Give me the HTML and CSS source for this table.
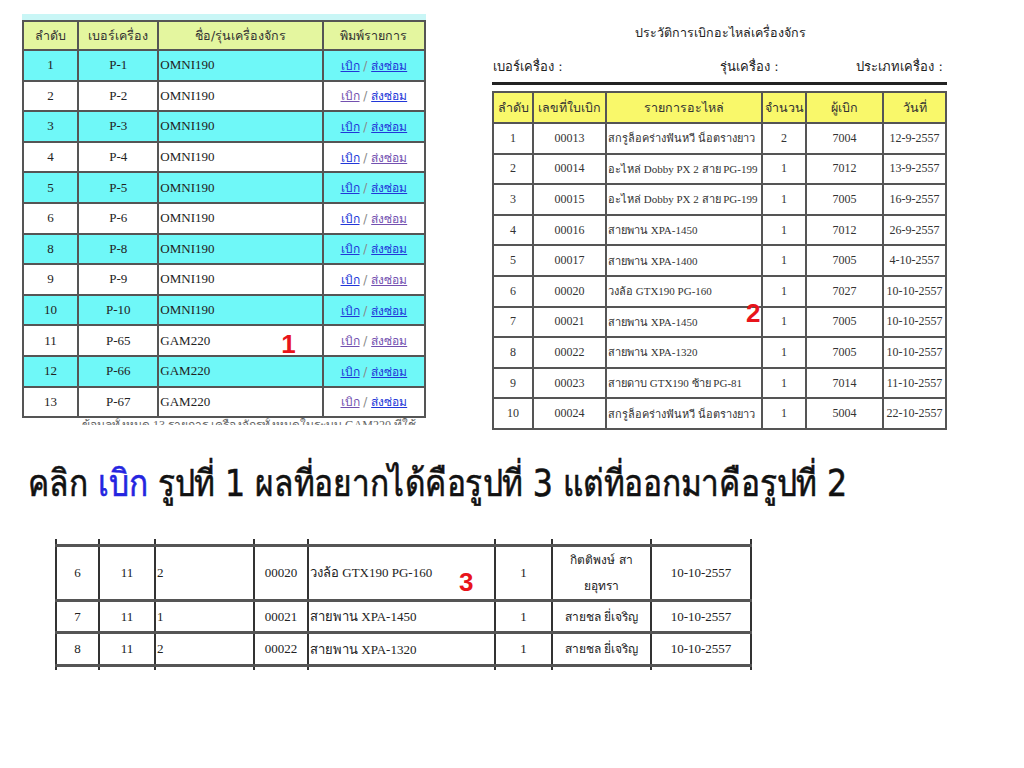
FILE: index.html
```html
<!DOCTYPE html>
<html lang="th">
<head>
<meta charset="utf-8">
<link rel="stylesheet" href="styles.css">
</head>
<body>
<div class="top">
  <div class="shot1">
    <table class="t1">
      <colgroup><col class="c1a"><col class="c1b"><col class="c1c"><col class="c1d"></colgroup>
      <tr class="hd"><th>ลำดับ</th><th>เบอร์เครื่อง</th><th>ชื่อ/รุ่นเครื่องจักร</th><th>พิมพ์รายการ</th></tr>
      <tr class="cy"><td>1</td><td>P-1</td><td class="l">OMNI190</td><td class="lk"><a class="b">เบิก</a> / <a class="b">ส่งซ่อม</a></td></tr>
      <tr><td>2</td><td>P-2</td><td class="l">OMNI190</td><td class="lk"><a class="v">เบิก</a> / <a class="b">ส่งซ่อม</a></td></tr>
      <tr class="cy"><td>3</td><td>P-3</td><td class="l">OMNI190</td><td class="lk"><a class="b">เบิก</a> / <a class="b">ส่งซ่อม</a></td></tr>
      <tr><td>4</td><td>P-4</td><td class="l">OMNI190</td><td class="lk"><a class="b">เบิก</a> / <a class="v">ส่งซ่อม</a></td></tr>
      <tr class="cy"><td>5</td><td>P-5</td><td class="l">OMNI190</td><td class="lk"><a class="b">เบิก</a> / <a class="b">ส่งซ่อม</a></td></tr>
      <tr><td>6</td><td>P-6</td><td class="l">OMNI190</td><td class="lk"><a class="b">เบิก</a> / <a class="v">ส่งซ่อม</a></td></tr>
      <tr class="cy"><td>8</td><td>P-8</td><td class="l">OMNI190</td><td class="lk"><a class="b">เบิก</a> / <a class="b">ส่งซ่อม</a></td></tr>
      <tr><td>9</td><td>P-9</td><td class="l">OMNI190</td><td class="lk"><a class="b">เบิก</a> / <a class="v">ส่งซ่อม</a></td></tr>
      <tr class="cy"><td>10</td><td>P-10</td><td class="l">OMNI190</td><td class="lk"><a class="b">เบิก</a> / <a class="b">ส่งซ่อม</a></td></tr>
      <tr><td>11</td><td>P-65</td><td class="l mark-cell">GAM220<span class="mark m1">1</span></td><td class="lk"><a class="v">เบิก</a> / <a class="v">ส่งซ่อม</a></td></tr>
      <tr class="cy"><td>12</td><td>P-66</td><td class="l">GAM220</td><td class="lk"><a class="b">เบิก</a> / <a class="b">ส่งซ่อม</a></td></tr>
      <tr><td>13</td><td>P-67</td><td class="l">GAM220</td><td class="lk"><a class="v">เบิก</a> / <a class="b">ส่งซ่อม</a></td></tr>
    </table>
    <div class="cutline"><span>ข้อมูลทั้งหมด 13 รายการ เครื่องจักรทั้งหมดในระบบ GAM220 ที่ใช้งาน</span></div>
  </div>

  <div class="shot2">
    <div class="title">ประวัติการเบิกอะไหล่เครื่องจักร</div>
    <div class="info"><span>เบอร์เครื่อง :</span><span>รุ่นเครื่อง :</span><span>ประเภทเครื่อง :</span></div>
    <div class="rule"></div>
    <table class="t2">
      <colgroup><col class="c2a"><col class="c2b"><col class="c2c"><col class="c2d"><col class="c2e"><col class="c2f"></colgroup>
      <tr class="hd2"><th>ลำดับ</th><th>เลขที่ใบเบิก</th><th>รายการอะไหล่</th><th>จำนวน</th><th>ผู้เบิก</th><th>วันที่</th></tr>
      <tr><td>1</td><td>00013</td><td class="l">สกรูล็อคร่างฟันหวี น็อตรางยาว</td><td>2</td><td>7004</td><td>12-9-2557</td></tr>
      <tr><td>2</td><td>00014</td><td class="l">อะไหล่ Dobby PX 2 สาย PG-199</td><td>1</td><td>7012</td><td>13-9-2557</td></tr>
      <tr><td>3</td><td>00015</td><td class="l">อะไหล่ Dobby PX 2 สาย PG-199</td><td>1</td><td>7005</td><td>16-9-2557</td></tr>
      <tr><td>4</td><td>00016</td><td class="l">สายพาน XPA-1450</td><td>1</td><td>7012</td><td>26-9-2557</td></tr>
      <tr><td>5</td><td>00017</td><td class="l">สายพาน XPA-1400</td><td>1</td><td>7005</td><td>4-10-2557</td></tr>
      <tr><td>6</td><td>00020</td><td class="l">วงล้อ GTX190 PG-160</td><td>1</td><td>7027</td><td>10-10-2557</td></tr>
      <tr><td>7</td><td>00021</td><td class="l mark-cell">สายพาน XPA-1450<span class="mark m2">2</span></td><td>1</td><td>7005</td><td>10-10-2557</td></tr>
      <tr><td>8</td><td>00022</td><td class="l">สายพาน XPA-1320</td><td>1</td><td>7005</td><td>10-10-2557</td></tr>
      <tr><td>9</td><td>00023</td><td class="l">สายดาบ GTX190 ซ้าย PG-81</td><td>1</td><td>7014</td><td>11-10-2557</td></tr>
      <tr><td>10</td><td>00024</td><td class="l">สกรูล็อคร่างฟันหวี น็อตรางยาว</td><td>1</td><td>5004</td><td>22-10-2557</td></tr>
    </table>
  </div>
</div>

<p class="caption"><span class="cap-inner">คลิก <span class="blue">เบิก</span> รูปที่ 1 ผลที่อยากได้คือรูปที่ 3 แต่ที่ออกมาคือรูปที่ 2</span></p>

<div class="shot3">
  <table class="t3">
    <colgroup><col class="c3a"><col class="c3b"><col class="c3c"><col class="c3d"><col class="c3e"><col class="c3f"><col class="c3g"><col class="c3h"></colgroup>
    <tr class="stub"><td></td><td></td><td></td><td></td><td></td><td></td><td></td><td></td></tr>
    <tr class="tall"><td>6</td><td>11</td><td class="l">2</td><td>00020</td><td class="l mark-cell">วงล้อ GTX190 PG-160<span class="mark m3">3</span></td><td>1</td><td class="who">กิตติพงษ์ สา<br>ยอุทรา</td><td>10-10-2557</td></tr>
    <tr><td>7</td><td>11</td><td class="l">1</td><td>00021</td><td class="l">สายพาน XPA-1450</td><td>1</td><td class="who">สายชล ยี่เจริญ</td><td>10-10-2557</td></tr>
    <tr><td>8</td><td>11</td><td class="l">2</td><td>00022</td><td class="l">สายพาน XPA-1320</td><td>1</td><td class="who">สายชล ยี่เจริญ</td><td>10-10-2557</td></tr>
    <tr class="stub"><td></td><td></td><td></td><td></td><td></td><td></td><td></td><td></td></tr>
  </table>
</div>
</body>
</html>
```

FILE: styles.css
```css
html, body {
  margin: 0;
  padding: 0;
  background: #ffffff;
}

body {
  width: 1024px;
  height: 768px;
  overflow: hidden;
  font-family: "Liberation Serif", "DejaVu Serif", serif;
  color: #222;
}

.top {
  display: flex;
  align-items: flex-start;
  padding: 14px 0 0 22px;
}

table {
  border-collapse: collapse;
  table-layout: fixed;
}

/* ---------- shot 1 ---------- */
.shot1 {
  width: 404px;
  border-top: 6px solid #c9f6f6;
}

.t1 {
  width: 404px;
  border: 2px solid #555;
}

.t1 th, .t1 td {
  border: 2px solid #555;
  padding: 0 1px;
  font-size: 13px;
  text-align: center;
  height: 28.6px;
  white-space: nowrap;
}

.t1 tr.hd th {
  height: 27px;
  background: #e4f69f;
  font-weight: normal;
  font-family: "DejaVu Sans", "Noto Sans", sans-serif;
  font-size: 12.5px;
  color: #333;
}

.t1 tr.cy td { background: #6ff8f8; }

.c1a { width: 55px; }
.c1b { width: 80px; }
.c1c { width: 164px; }
.c1d { width: 102px; }

.t1 td.l, .t2 td.l, .t3 td.l { text-align: left; }

.t1 td.lk {
  font-family: "DejaVu Sans", "Noto Sans", sans-serif;
  font-size: 12px;
  color: #888;
}
.lk a { text-decoration: underline; }
.lk a.b { color: #2236d8; }
.lk a.v { color: #7350b0; }

.mark-cell { position: relative; }
.mark {
  position: absolute;
  color: #e8141b;
  font-family: "Liberation Sans", "DejaVu Sans", sans-serif;
  font-weight: bold;
  font-size: 26px;
  line-height: 1;
}
.m1 { left: 122px; top: 5px; }
.m2 { left: 139px; top: -8px; }
.m3 { left: 150px; top: 22px; }

.cutline {
  height: 7px;
  overflow: hidden;
  font-size: 12px;
  color: #666;
  line-height: 20px;
  padding-left: 60px;
}
.cutline span { display: block; margin-top: -3px; }

/* ---------- shot 2 ---------- */
.shot2 {
  width: 455px;
  margin-left: 66px;
  margin-top: 9px;
  font-family: "DejaVu Sans", "Noto Sans", sans-serif;
  color: #222;
}

.title {
  text-align: center;
  font-size: 12.5px;
  line-height: 20px;
  height: 20px;
  padding-left: 2px;
}

.info {
  display: flex;
  justify-content: space-between;
  font-size: 13px;
  line-height: 20px;
  margin-top: 14px;
  padding: 0 4px 0 1px;
}
.info span:nth-child(2) { margin-left: 80px; }

.rule {
  height: 3px;
  background: #222;
  margin-top: 5px;
}

.t2 {
  width: 455px;
  margin-top: 6px;
  border: 2px solid #555;
}

.t2 th, .t2 td {
  border: 2px solid #555;
  font-family: "Liberation Serif", "DejaVu Serif", serif;
  font-size: 12px;
  text-align: center;
  height: 28.6px;
  padding: 0 1px;
  white-space: nowrap;
  color: #333;
}

.t2 tr.hd2 th {
  background: #f9f86a;
  font-weight: normal;
  font-family: "DejaVu Sans", "Noto Sans", sans-serif;
  font-size: 12.5px;
  height: 29px;
}

.t2 td.l { font-size: 11px; }

.c2a { width: 40px; }
.c2b { width: 73px; }
.c2c { width: 156px; }
.c2d { width: 44px; }
.c2e { width: 77px; }
.c2f { width: 63px; }

/* ---------- caption ---------- */
.caption {
  margin: 30px 0 0 28px;
  font-family: "DejaVu Sans", "Noto Sans", sans-serif;
  font-size: 37px;
  line-height: 48px;
  color: #111;
  white-space: nowrap;
}
.cap-inner {
  display: inline-block;
  transform: scaleX(0.855);
  transform-origin: left center;
  -webkit-text-stroke: 0.6px #111;
}
.caption .blue { color: #2424e0; -webkit-text-stroke: 0.6px #2424e0; }

/* ---------- shot 3 ---------- */
.shot3 {
  margin: 31px 0 0 55px;
  width: 697px;
  height: 131px;
  overflow: hidden;
}

.t3 {
  width: 697px;
  border-left: 2px solid #333;
  border-right: 2px solid #333;
}

.t3 td {
  border-left: 2px solid #333;
  border-right: 2px solid #333;
  border-top: 3px solid #555;
  border-bottom: 3px solid #555;
  font-size: 13px;
  text-align: center;
  height: 29.5px;
  padding: 0 1px;
  white-space: nowrap;
  color: #222;
}

.t3 tr.stub td {
  height: 5px;
  border-top: 0;
  border-bottom: 0;
}
.t3 tr.stub:last-child td { border-top: 3px solid #555; }
.t3 tr.tall td { height: 51px; }

.t3 td.who {
  font-family: "DejaVu Sans", "Noto Sans", sans-serif;
  font-size: 12px;
  line-height: 26px;
}

.c3a { width: 43px; }
.c3b { width: 56px; }
.c3c { width: 99px; }
.c3d { width: 54px; }
.c3e { width: 187px; }
.c3f { width: 57px; }
.c3g { width: 99px; }
.c3h { width: 100px; }
```
